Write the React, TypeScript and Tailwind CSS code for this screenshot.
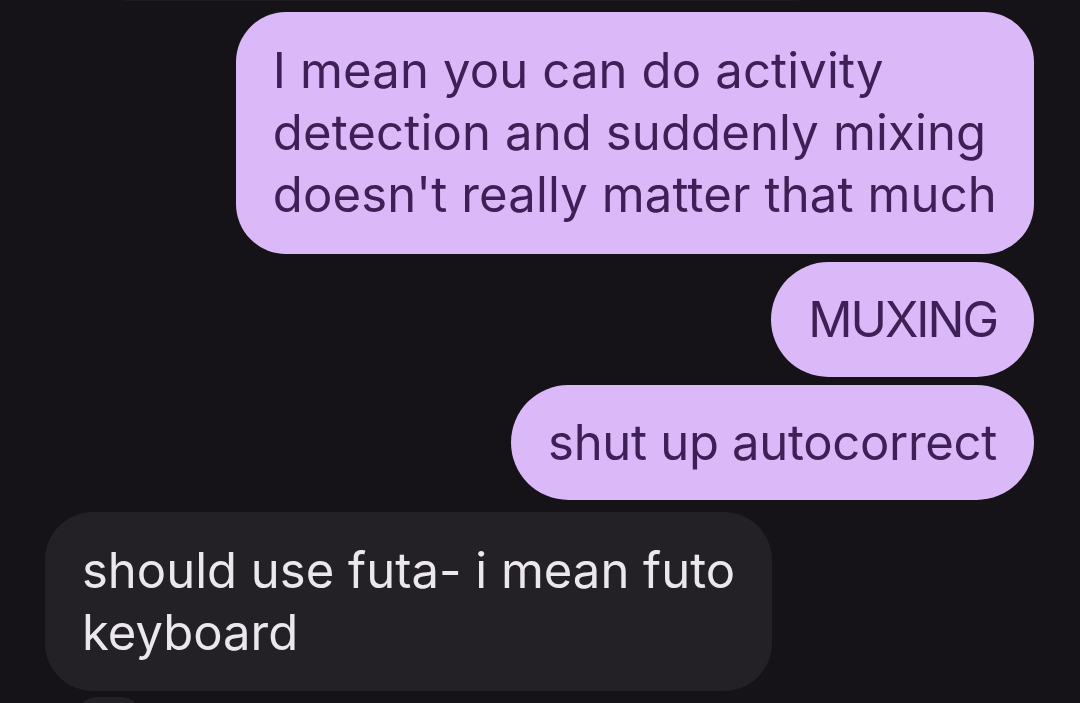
import React from "react";

const font = { fontFamily: "Inter, 'Noto Sans', sans-serif" };

function Out({ children, single }: { children: React.ReactNode; single?: boolean }) {
  return (
    <div className="flex justify-end">
      {single ? (
        <div className="bg-[#dbb8f8] text-[#3e2056] rounded-full px-[37px] h-[115px] flex items-center whitespace-nowrap">
          {children}
        </div>
      ) : (
        <div className="bg-[#dbb8f8] text-[#3e2056] rounded-[50px] px-[37px] py-[28px] whitespace-nowrap tracking-[0.15px]">
          {children}
        </div>
      )}
    </div>
  );
}

export default function App() {
  return (
    <div
      className="w-[1080px] h-[703px] overflow-hidden bg-[#151318] relative text-[49px] leading-[62px]"
      style={font}
    >
      <div className="absolute left-[89px] top-[-40px] w-[745px] h-[41px] rounded-b-[40px] bg-[#1e1c21]" />
      <div className="flex flex-col pt-[12px] pr-[46px] pl-[45px]">
        <Out>
          I mean you can do activity
          <br />
          detection and suddenly mixing
          <br />
          doesn't really matter that much
        </Out>
        <div className="h-[8px]" />
        <Out single>
          <span className="tracking-[-2px]">MUXING</span>
        </Out>
        <div className="h-[8px]" />
        <Out single>
          <span className="tracking-[-0.3px]">shut up autocorrect</span>
        </Out>
        <div className="h-[12px]" />
        <div className="flex justify-start">
          <div className="bg-[#232026] text-[#ece6ee] rounded-[48px] px-[37px] pt-[28px] pb-[27px] whitespace-nowrap">
            should use futa- i mean futo
            <br />
            keyboard
          </div>
        </div>
        <div className="h-[6px]" />
        <div className="ml-[32px] w-[64px] h-[40px] rounded-full bg-[#232026]" />
      </div>
    </div>
  );
}
